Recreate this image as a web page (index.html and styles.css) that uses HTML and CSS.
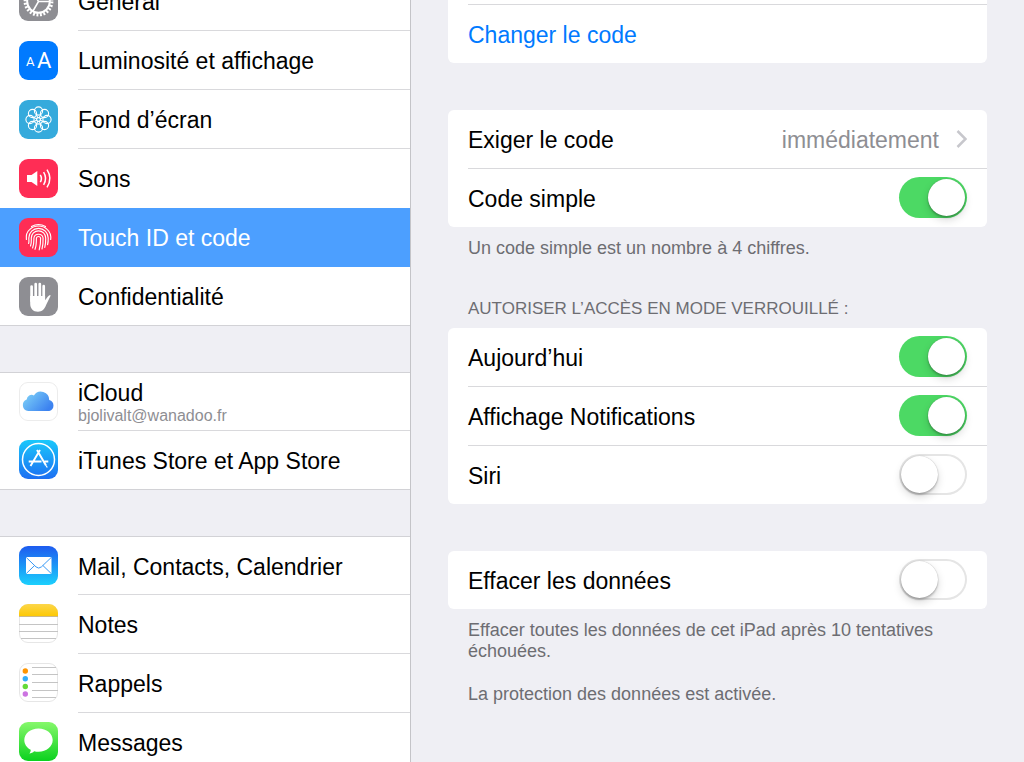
FILE: index.html
```html
<!DOCTYPE html>
<html lang="fr">
<head>
  <meta charset="utf-8">
  <title>Réglages</title>
  <link rel="stylesheet" href="styles.css">
</head>
<body>
  <nav class="sidebar">
    <div class="group">
      <a href="#" class="item">
        <svg class="icon" viewBox="0 0 39 39">
          <rect width="39" height="39" rx="9" fill="#8e8e93"/>
          <g fill="none" stroke="#fff">
            <circle cx="19.5" cy="19.5" r="13.3" stroke-width="3.2" stroke-dasharray="1.9 1.582"/>
            <circle cx="19.5" cy="19.5" r="11.3" stroke-width="2"/>
            <path d="M19.5 19.5h11M19.5 19.5l-5.5 9.500M19.5 19.5L14 10" stroke-width="1.5"/>
          </g>
        </svg>
        <span class="label">Général</span>
      </a>
      <a href="#" class="item">
        <svg class="icon" viewBox="0 0 39 39">
          <rect width="39" height="39" rx="9" fill="#007aff"/>
          <text class="glyph-small" x="7" y="25">A</text>
          <text class="glyph-big" x="18" y="27">A</text>
        </svg>
        <span class="label">Luminosité et affichage</span>
      </a>
      <a href="#" class="item">
        <svg class="icon" viewBox="0 0 39 39">
          <rect width="39" height="39" rx="9" fill="#35aadc"/>
          <g fill="none" stroke="#fff" stroke-width="1.1">
            <circle cx="19.5" cy="11" r="4.1"/>
            <circle cx="25.5" cy="13.5" r="4.1"/>
            <circle cx="28" cy="19.5" r="4.1"/>
            <circle cx="25.5" cy="25.5" r="4.1"/>
            <circle cx="19.5" cy="28" r="4.1"/>
            <circle cx="13.5" cy="25.5" r="4.1"/>
            <circle cx="11" cy="19.5" r="4.1"/>
            <circle cx="13.5" cy="13.5" r="4.1"/>
            <path d="M17.200 14.200l4.600 10.600M21.800 14.200l-4.600 10.600M14.200 17.200l10.600 4.600M24.800 17.200l-10.600 4.600"/>
          </g>
          <circle cx="19.5" cy="19.5" r="2.4" fill="#fff"/>
          <circle cx="19.5" cy="19.5" r="1.2" fill="#35aadc"/>
        </svg>
        <span class="label">Fond d’écran</span>
      </a>
      <a href="#" class="item">
        <svg class="icon" viewBox="0 0 39 39">
          <rect width="39" height="39" rx="9" fill="#ff2d55"/>
          <path d="M8 16h4.5l5.8-4v15l-5.8-4H8z" fill="#fff"/>
          <g fill="none" stroke="#fff" stroke-width="1.5">
            <path d="M21.3 15.8q2.2 3.7 0 7.4"/>
            <path d="M24.6 13.2q4 6.3 0 12.6"/>
            <path d="M28 10.7q5.8 8.8 0 17.6"/>
          </g>
        </svg>
        <span class="label">Sons</span>
      </a>
      <a href="#" class="item selected">
        <svg class="icon" viewBox="0 0 39 39">
          <rect width="39" height="39" rx="9" fill="#ff2d55"/>
          <g fill="none" stroke="#fff" stroke-width="1.15" stroke-linecap="round">
            <path d="M12.500 8.600a13.500 13.500 0 0 1 14 0"/>
            <path d="M7.400 21.500c-.6-4.500.7-7.800 3.200-9.900a12.800 12.800 0 0 1 17.800 0c2.400 2.200 3.800 5.400 3.300 9.900"/>
            <path d="M9.600 25.500c.7-2 .2-3.500.2-5.500a9.700 9.700 0 0 1 19.400 0c.1 2.600-.1 4.600-.6 6.700"/>
            <path d="M11.500 28c1.200-3 .8-5.500.8-8a7.200 7.200 0 0 1 14.400 0c.1 3.600-.2 6.400-.9 9.400"/>
            <path d="M13.600 30c1.500-3.600 1.300-6.500 1.300-10a4.700 4.700 0 0 1 9.200 0c.1 4.300-.3 7.700-1.100 11"/>
            <path d="M16 31.300c1.500-4 1.400-7.300 1.400-11.300a2.200 2.200 0 0 1 4.200 0c.1 4.600-.4 8.300-1.400 11.800"/>
          </g>
        </svg>
        <span class="label">Touch ID et code</span>
      </a>
      <a href="#" class="item">
        <svg class="icon" viewBox="0 0 39 39">
          <rect width="39" height="39" rx="9" fill="#8e8e93"/>
          <path d="M12.6 9.5V24M16.7 7.2V22M20.8 7V22M24.7 9.2V24" stroke="#fff" stroke-width="2.7" stroke-linecap="round"/>
          <path d="M11.2 19h14.9v4.300l2.600-3.600c1-1.500 2.100-1.900 3-1.300l-4.600 9.600c-1.500 4.200-4.100 6.700-8.100 6.700-5 0-7.800-3.500-7.800-8z" fill="#fff"/>
        </svg>
        <span class="label">Confidentialité</span>
      </a>
    </div>

    <div class="group">
      <a href="#" class="item">
        <svg class="icon" viewBox="0 0 39 39">
          <defs>
            <linearGradient id="cloud" x1="0" y1="0" x2="1" y2="0.6">
              <stop offset="0" stop-color="#83d8f8"/>
              <stop offset="1" stop-color="#3c82f0"/>
            </linearGradient>
          </defs>
          <rect x="0.5" y="0.5" width="38" height="38" rx="8.5" fill="#fff" stroke="#ececec"/>
          <path d="M9.200 29a5.900 5.900 0 0 1-1.500-11.400 5 5 0 0 1 7.200-4.200 8.300 8.300 0 0 1 15.300 4.600A5.700 5.700 0 0 1 30.300 29z" fill="url(#cloud)"/>
        </svg>
        <span class="label">iCloud<small>bjolivalt@wanadoo.fr</small></span>
      </a>
      <a href="#" class="item">
        <svg class="icon" viewBox="0 0 39 39">
          <defs>
            <linearGradient id="store" x1="0" y1="0" x2="0" y2="1">
              <stop offset="0" stop-color="#1ac8fb"/>
              <stop offset="1" stop-color="#1d6ff2"/>
            </linearGradient>
          </defs>
          <rect width="39" height="39" rx="9" fill="url(#store)"/>
          <g fill="none" stroke="#fff">
            <circle cx="19.5" cy="19.5" r="16" stroke-width="1.5"/>
            <path d="M18 10l9 15.500M21 10L11.500 26M9.700 21.500h12.800M25.500 21.500h3.800" stroke-width="1.9"/>
            <path d="M27 25.500l1.300 2" stroke-width="1.300"/>
          </g>
        </svg>
        <span class="label">iTunes Store et App Store</span>
      </a>
    </div>

    <div class="group">
      <a href="#" class="item">
        <svg class="icon" viewBox="0 0 39 39">
          <defs>
            <linearGradient id="mail" x1="0" y1="0" x2="0" y2="1">
              <stop offset="0" stop-color="#1e5bef"/>
              <stop offset="1" stop-color="#1bd0fd"/>
            </linearGradient>
          </defs>
          <rect width="39" height="39" rx="9" fill="url(#mail)"/>
          <rect x="7" y="11" width="25.5" height="17" rx="1" fill="#fff"/>
          <path d="M7.3 11.5l9.700 9.400q2.700 2.400 5.400 0l9.800-9.400M7.300 27.500l8.300-8M32.200 27.500l-8.300-8" fill="none" stroke="#3a9af5" stroke-width="1"/>
        </svg>
        <span class="label">Mail, Contacts, Calendrier</span>
      </a>
      <a href="#" class="item">
        <svg class="icon" viewBox="0 0 39 39">
          <defs>
            <linearGradient id="notes" x1="0" y1="0" x2="0" y2="1">
              <stop offset="0" stop-color="#fcd64a"/>
              <stop offset="1" stop-color="#fdc905"/>
            </linearGradient>
          </defs>
          <rect x="0.5" y="0.5" width="38" height="38" rx="8.5" fill="#fff" stroke="#e6e6e6"/>
          <path d="M0 12V9a9 9 0 0 1 9-9h21a9 9 0 0 1 9 9v3z" fill="url(#notes)"/>
          <path d="M0 12.5h39" stroke="#cbb98a"/>
          <path d="M0 20.500h39M0 27.500h39M2 34.500h35" stroke="#c4c4c4"/>
        </svg>
        <span class="label">Notes</span>
      </a>
      <a href="#" class="item">
        <svg class="icon" viewBox="0 0 39 39">
          <rect x="0.5" y="0.5" width="38" height="38" rx="8.5" fill="#fff" stroke="#e6e6e6"/>
          <path d="M13 4.500h24M13 11.500h26M13 19.500h26M13 27.500h26M13 34.500h24" stroke="#c4c4c4"/>
          <circle cx="6.3" cy="8" r="2.700" fill="#ff9500"/>
          <circle cx="6.3" cy="15.700" r="2.700" fill="#34aefb"/>
          <circle cx="6.3" cy="23.500" r="2.700" fill="#63da38"/>
          <circle cx="6.3" cy="31" r="2.700" fill="#cc73e1"/>
        </svg>
        <span class="label">Rappels</span>
      </a>
      <a href="#" class="item">
        <svg class="icon" viewBox="0 0 39 39">
          <defs>
            <linearGradient id="messages" x1="0" y1="0" x2="0" y2="1">
              <stop offset="0" stop-color="#86f86b"/>
              <stop offset="1" stop-color="#0bd11e"/>
            </linearGradient>
          </defs>
          <rect width="39" height="39" rx="9" fill="url(#messages)"/>
          <path d="M19.5 6.500c8 0 14.200 5 14.200 11.600s-6.200 11.700-14.200 11.700c-1.500 0-3-.2-4.400-.6-1.200 1.300-2.900 2.200-4.800 2.300 1-1 1.500-2.200 1.400-3.700-4-2-6.400-5.600-6.400-9.700C5.300 11.500 11.500 6.500 19.500 6.500z" fill="#fff"/>
        </svg>
        <span class="label">Messages</span>
      </a>
    </div>
  </nav>

  <main class="detail">
    <section class="card card-scrolled">
      <button class="row row-action">Changer le code</button>
    </section>

    <section class="card">
      <a href="#" class="row">
        <span>Exiger le code</span>
        <span class="value">immédiatement
          <svg class="chevron" viewBox="0 0 11 18"><path d="M1.500 1l8 8-8 8" fill="none" stroke="#c7c7cc" stroke-width="2.500"/></svg>
        </span>
      </a>
      <div class="row">
        <label for="simple">Code simple</label>
        <input type="checkbox" id="simple" class="switch" checked>
      </div>
    </section>
    <p class="note">Un code simple est un nombre à 4 chiffres.</p>

    <h2 class="heading">AUTORISER L’ACCÈS EN MODE VERROUILLÉ :</h2>
    <section class="card">
      <div class="row">
        <label for="today">Aujourd’hui</label>
        <input type="checkbox" id="today" class="switch" checked>
      </div>
      <div class="row">
        <label for="notifications">Affichage Notifications</label>
        <input type="checkbox" id="notifications" class="switch" checked>
      </div>
      <div class="row">
        <label for="siri">Siri</label>
        <input type="checkbox" id="siri" class="switch">
      </div>
    </section>

    <section class="card card-spaced">
      <div class="row">
        <label for="erase">Effacer les données</label>
        <input type="checkbox" id="erase" class="switch">
      </div>
    </section>
    <p class="note">Effacer toutes les données de cet iPad après 10 tentatives échouées.</p>
    <p class="note note-last">La protection des données est activée.</p>
  </main>
</body>
</html>
```
FILE: styles.css
```css
* {
  box-sizing: border-box;
}

body {
  display: flex;
  height: 100vh;
  margin: 0;
  overflow: hidden;
  font-family: "Liberation Sans", Arial, sans-serif;
  font-size: 23px;
  line-height: 26px;
  color: #000;
  background-color: #efeff4;
}

a {
  color: inherit;
  text-decoration: none;
}

/* Sidebar, scrolled part way through the first row */

.sidebar {
  flex: 0 0 411px;
  border-right: 1px solid #c4c4c8;
}

.group {
  margin-bottom: 46px;
  background-color: #fff;
  border-bottom: 1px solid #d2d2d6;
}

.group:first-child {
  margin-top: -28px;
}

.group + .group {
  border-top: 1px solid #d2d2d6;
}

.item {
  display: flex;
  gap: 20px;
  height: 59px;
  padding-left: 19px;
}

.item:last-child,
.group + .group .item:first-child {
  height: 58px;
}

.icon {
  flex: none;
  width: 39px;
  height: 39px;
  margin-top: 10px;
}

.group + .group .icon {
  margin-top: 9px;
}

.label {
  flex: 1;
  display: flex;
  flex-direction: column;
  justify-content: center;
  padding-top: 2px;
  border-bottom: 1px solid #d9d9dc;
}

.item:last-child .label,
.item:has(+ .selected) .label,
.selected .label {
  border-bottom-color: transparent;
}

.label small {
  font-size: 16px;
  line-height: 20px;
  color: #8e8e93;
}

.selected {
  color: #fff;
  background-color: #4c9fff;
}

.glyph-small,
.glyph-big {
  font-family: Roboto, sans-serif;
  font-size: 13px;
  fill: #fff;
}

.glyph-big {
  font-size: 22px;
}

/* Detail pane */

.detail {
  flex: 1;
  padding: 0 37px;
}

.card {
  padding-left: 20px;
  background-color: #fff;
  border-radius: 6px;
}

.card-scrolled {
  padding-top: 4px;
  margin-bottom: 47px;
  border-radius: 0 0 6px 6px;
}

.card-spaced {
  margin-top: 47px;
}

.row {
  display: flex;
  align-items: center;
  justify-content: space-between;
  height: 58px;
  padding: 2px 20px 0 0;
}

.row + .row,
.row-action {
  height: 59px;
  border-top: 1px solid #d9d9dc;
}

.row-action {
  width: 100%;
  border-width: 1px 0 0;
  font: inherit;
  color: #007aff;
  background: none;
  cursor: pointer;
}

.value {
  display: flex;
  align-items: center;
  gap: 17px;
  color: #8e8e93;
}

.chevron {
  width: 11px;
  height: 18px;
  margin-bottom: 2px;
}

.switch {
  appearance: none;
  width: 68px;
  height: 41px;
  margin: 0 0 4px;
  padding: 2px;
  border-radius: 21px;
  background-color: #fff;
  box-shadow: inset 0 0 0 2px #e5e5e5;
  cursor: pointer;
}

.switch::before {
  content: "";
  display: block;
  width: 37px;
  height: 37px;
  border-radius: 50%;
  background-color: #fff;
  box-shadow: 0 0 1px rgba(0, 0, 0, 0.3), 0 2px 2px rgba(0, 0, 0, 0.2), 0 4px 8px rgba(0, 0, 0, 0.15);
}

.switch:checked {
  background-color: #4cd964;
  box-shadow: none;
}

.switch:checked::before {
  margin-left: auto;
}

.note,
.heading {
  margin: 11px 20px 0;
  font-size: 18px;
  font-weight: normal;
  line-height: 21px;
  color: #6d6d72;
}

.note-last {
  margin-top: 22px;
}

.heading {
  margin-top: 39px;
  margin-bottom: 9px;
  font-size: 17px;
}
```
